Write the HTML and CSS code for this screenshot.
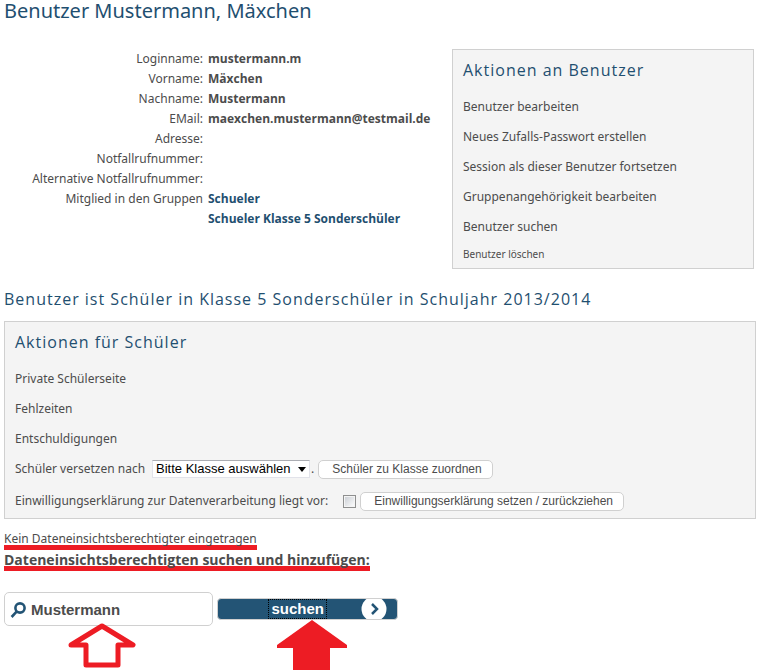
FILE: index.html
```html
<!DOCTYPE html>
<html lang="de">
<head>
  <meta charset="UTF-8">
  <meta name="viewport" content="width=device-width, initial-scale=1.0">
  <title>Benutzer Mustermann, Mäxchen</title>
  <link rel="stylesheet" href="styles.css">
</head>
<body>

  <h1>Benutzer Mustermann, Mäxchen</h1>

  <div class="overview">
    <table class="userdata">
      <tr><th scope="row">Loginname:</th><td>mustermann.m</td></tr>
      <tr><th scope="row">Vorname:</th><td>Mäxchen</td></tr>
      <tr><th scope="row">Nachname:</th><td>Mustermann</td></tr>
      <tr><th scope="row">EMail:</th><td>maexchen.mustermann@testmail.de</td></tr>
      <tr><th scope="row">Adresse:</th><td></td></tr>
      <tr><th scope="row">Notfallrufnummer:</th><td></td></tr>
      <tr><th scope="row">Alternative Notfallrufnummer:</th><td></td></tr>
      <tr><th scope="row">Mitglied in den Gruppen</th><td><a href="#">Schueler</a></td></tr>
      <tr><th scope="row"></th><td><a href="#">Schueler Klasse 5 Sonderschüler</a></td></tr>
    </table>

    <div class="box user-actions">
      <h2>Aktionen an Benutzer</h2>
      <ul>
        <li><a href="#">Benutzer bearbeiten</a></li>
        <li><a href="#">Neues Zufalls-Passwort erstellen</a></li>
        <li><a href="#">Session als dieser Benutzer fortsetzen</a></li>
        <li><a href="#">Gruppenangehörigkeit bearbeiten</a></li>
        <li><a href="#">Benutzer suchen</a></li>
        <li class="small"><a href="#">Benutzer löschen</a></li>
      </ul>
    </div>
  </div>

  <h3>Benutzer ist Schüler in Klasse 5 Sonderschüler in Schuljahr 2013/2014</h3>

  <div class="box student-actions">
    <h2>Aktionen für Schüler</h2>
    <ul>
      <li><a href="#">Private Schülerseite</a></li>
      <li><a href="#">Fehlzeiten</a></li>
      <li><a href="#">Entschuldigungen</a></li>
    </ul>
    <form class="form-row">
      <label for="klasse">Schüler versetzen nach</label>
      <span class="select">
        <select id="klasse">
          <option>Bitte Klasse auswählen</option>
        </select>
        <svg width="8" height="5" viewBox="0 0 8 5" aria-hidden="true"><path d="M0 0h8L4 5z"/></svg>
      </span>
      <span class="dot">.</span>
      <button type="button" class="btn">Schüler zu Klasse zuordnen</button>
    </form>
    <form class="form-row">
      <label for="einwilligung">Einwilligungserklärung zur Datenverarbeitung liegt vor:</label>
      <input type="checkbox" id="einwilligung">
      <button type="button" class="btn">Einwilligungserklärung setzen / zurückziehen</button>
    </form>
  </div>

  <div class="access">
    <p><span class="marked">Kein Dateneinsichtsberechtigter eingetragen</span></p>
    <p class="search-title"><label class="marked" for="suche">Dateneinsichtsberechtigten suchen und hinzufügen:</label></p>
  </div>

  <form class="search">
    <div class="search-field">
      <svg class="lens" width="17" height="17" viewBox="0 0 17 17" aria-hidden="true">
        <circle cx="10" cy="6" r="4.6"/>
        <path d="M6.6 9.6L1.6 15"/>
      </svg>
      <input type="text" id="suche" value="Mustermann">
      <svg class="arrow arrow-input" width="70" height="46" viewBox="0 0 70 46" aria-hidden="true">
        <path d="M35 3L66 22H51V42H19V22H4z"/>
      </svg>
    </div>
    <div class="search-submit">
      <button type="button">
        <span class="caption">suchen</span>
        <svg class="chevron" width="26" height="20" viewBox="0 0 26 20" aria-hidden="true">
          <circle cx="13" cy="10" r="12.5"/>
          <path d="M11 5l5 5-5 5"/>
        </svg>
      </button>
      <svg class="arrow arrow-submit" width="70" height="50" viewBox="0 0 70 50" aria-hidden="true">
        <path d="M35 0L70 25V28H53V50H16V28H0V25z"/>
      </svg>
    </div>
  </form>

</body>
</html>
```
FILE: styles.css
```css
* {
  box-sizing: border-box;
}
body {
  margin: 0;
  padding: 0 3px 44px 4px;
  font-family: "Noto Sans", "Open Sans", sans-serif;
  font-size: 12px;
  line-height: 20px;
  color: #4c4c4c;
  background: #fff;
}
h1, h2, h3 {
  margin: 0;
  font-family: "Open Sans", "Noto Sans", sans-serif;
  font-weight: normal;
  color: #1f4f70;
}
h1 {
  font-family: "Noto Sans", "Open Sans", sans-serif;
  font-size: 20px;
  line-height: 22px;
}
h2 {
  font-size: 16px;
  line-height: 20px;
  letter-spacing: 1px;
  margin-bottom: 12px;
}
h3 {
  font-size: 16px;
  line-height: 20px;
  letter-spacing: 1px;
  margin: 20px 0 12px;
}
p, ul {
  margin: 0;
  padding: 0;
}
ul {
  list-style: none;
}
a {
  color: inherit;
  text-decoration: none;
}

/* user data and its actions */
.overview {
  display: flex;
  justify-content: space-between;
  align-items: flex-start;
  margin-top: 27px;
  padding-right: 2px;
}
.userdata {
  border-collapse: collapse;
}
.userdata th,
.userdata td {
  height: 20px;
  padding: 0;
}
.userdata th {
  width: 199px;
  font-weight: normal;
  text-align: right;
}
.userdata td {
  padding-left: 5px;
  font-family: "Open Sans", "Noto Sans", sans-serif;
  font-weight: bold;
}
.userdata a {
  color: #1f4f70;
}
.box {
  padding: 10px;
  background: #f4f4f4;
  border: 1px solid #d0d0d0;
}
.box li {
  padding: 5px 0;
}
.user-actions {
  width: 302px;
  padding-bottom: 2px;
}
.box .small {
  padding: 2px 0;
  font-size: 10px;
}

.student-actions {
  padding-bottom: 2px;
}
.form-row {
  display: flex;
  align-items: center;
  height: 30px;
}
.form-row + .form-row {
  margin-top: 2px;
}
.select {
  position: relative;
  margin-left: 7px;
}
.select select {
  display: block;
  appearance: none;
  width: 158px;
  height: 18px;
  padding: 0 3px;
  border: 1px solid #e2e3ea;
  border-top-color: #abadb3;
  border-radius: 0;
  background: #fff;
  color: #000;
  font: 13px/16px "Liberation Sans", Arial, sans-serif;
}
.select svg {
  position: absolute;
  right: 4px;
  top: 7px;
  pointer-events: none;
}
.dot {
  margin: 0 4px 0 1px;
}
.btn {
  height: 19px;
  padding: 0 10px 0 13px;
  border: 1px solid #d0d0d0;
  border-radius: 5px;
  background: #fff;
  color: #4c4c4c;
  font: 12px/17px "Liberation Sans", Arial, sans-serif;
}
.form-row input {
  appearance: none;
  width: 13px;
  height: 13px;
  margin: 0 4px 0 15px;
  border: 1px solid #8e8f8f;
  background: linear-gradient(135deg, #c8ccd2, #fff);
  box-shadow: inset 0 0 0 1px #f4f4f4;
}

/* search */
.access {
  margin-top: 10px;
}
.marked {
  display: inline-block;
  height: 21px;
  border-bottom: 5px solid #ed1c24;
}
.access p {
  height: 21px;
}
.search-title {
  font-family: "Open Sans", "Noto Sans", sans-serif;
  font-size: 14px;
  font-weight: bold;
}
.search {
  display: flex;
  align-items: center;
  gap: 4px;
  margin-top: 21px;
}
.search-field,
.search-submit {
  position: relative;
}
.search-field input {
  display: block;
  width: 209px;
  height: 34px;
  padding: 0 8px 0 26px;
  border: 1px solid #d0d0d0;
  border-radius: 5px;
  background: #fff;
  color: #4c4c4c;
  font: bold 15px "Liberation Sans", Arial, sans-serif;
}
.lens {
  position: absolute;
  left: 6px;
  top: 10px;
  fill: none;
  stroke: #235475;
  stroke-width: 2.6;
}
.search-submit button {
  display: flex;
  justify-content: flex-end;
  align-items: center;
  width: 181px;
  height: 22px;
  padding: 0 10px 0 0;
  border: 1px solid #d0d0d0;
  border-radius: 4px;
  background: #235475;
  color: #fff;
  font: bold 15px/18px "Liberation Sans", Arial, sans-serif;
}
.caption {
  margin-right: 34px;
  padding: 0 2px;
  border: 1px dotted #000;
}
.chevron circle {
  fill: #fff;
}
.chevron path {
  fill: none;
  stroke: #235475;
  stroke-width: 2.5;
}

/* red pointers under the search controls */
.arrow {
  position: absolute;
  pointer-events: none;
}
.arrow-input {
  left: 63px;
  top: 31px;
  fill: #fff;
  stroke: #ed1c24;
  stroke-width: 5;
  stroke-linejoin: round;
}
.arrow-submit {
  left: 60px;
  top: 22px;
  fill: #ed1c24;
}
```
